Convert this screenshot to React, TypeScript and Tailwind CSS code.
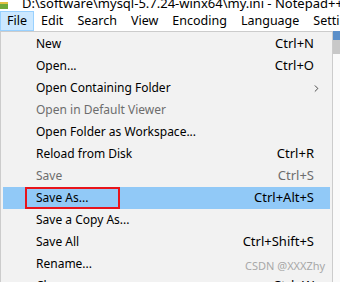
import { ChevronRight } from 'lucide-react';

type Item = {
  label: string;
  shortcut?: string;
  disabled?: boolean;
  active?: boolean;
  submenu?: boolean;
};

const items: Item[] = [
  { label: 'New', shortcut: 'Ctrl+N' },
  { label: 'Open...', shortcut: 'Ctrl+O' },
  { label: 'Open Containing Folder', submenu: true },
  { label: 'Open in Default Viewer', disabled: true },
  { label: 'Open Folder as Workspace...' },
  { label: 'Reload from Disk', shortcut: 'Ctrl+R' },
  { label: 'Save', shortcut: 'Ctrl+S', disabled: true },
  { label: 'Save As...', shortcut: 'Ctrl+Alt+S', active: true },
  { label: 'Save a Copy As...' },
  { label: 'Save All', shortcut: 'Ctrl+Shift+S' },
  { label: 'Rename...' },
  { label: 'Close', shortcut: 'Ctrl+W' },
];

const menus = ['File', 'Edit', 'Search', 'View', 'Encoding', 'Language', 'Settings'];

const App = () => {
  return (
    <div
      className="relative w-[340px] h-[282px] overflow-hidden bg-white text-black"
      style={{ fontFamily: '"Noto Sans", "Liberation Sans", sans-serif' }}
    >
      {/* Title bar, cut off at the top */}
      <div className="h-[11px] flex items-end overflow-hidden bg-white">
        <div className="w-[8px] h-[7px] bg-[#6fa83a] border-t-2 border-[#e0c040] mr-[14px] mb-[2px] shrink-0" />
        <span className="text-[13px] leading-[14px] mb-[1px] whitespace-nowrap">
          D:\software\mysql-5.7.24-winx64\my.ini - Notepad++
        </span>
      </div>

      {/* Menu bar */}
      <div className="h-[20px] flex items-stretch bg-white whitespace-nowrap text-[12.5px]">
        {menus.map((m, i) => (
          <div
            key={m}
            className={`flex items-center ${
              i === 0 ? 'bg-[#cce8ff] border border-[#99d1ff] px-[6px]' : 'px-[7px]'
            }`}
          >
            {m}
          </div>
        ))}
      </div>

      <div className="flex">
        {/* Dropdown */}
        <div className="w-[333px] shrink-0 bg-[#f2f2f2] border border-[#cccccc] pt-[1px] px-[2px] shadow-[2px_2px_2px_rgba(0,0,0,0.3)]">
          {items.map((it) => (
            <div
              key={it.label}
              className={`relative h-[22px] flex items-center pl-[33px] pr-[16px] whitespace-nowrap ${
                it.active ? 'bg-[#91c9f7]' : ''
              } ${it.disabled ? 'text-[#6d6d6d]' : ''}`}
            >
              {it.active && (
                <div className="absolute left-[22px] top-0 w-[95px] h-[22px] border-2 border-[#e8141b]" />
              )}
              <span className="flex-1 text-[12px]">{it.label}</span>
              {it.shortcut && <span className="text-[13px]">{it.shortcut}</span>}
              {it.submenu && <ChevronRight className="w-[11px] h-[11px] -mr-[8px]" strokeWidth={1.5} />}
            </div>
          ))}
        </div>

        {/* Editor strip at the right edge */}
        <div className="flex-1 flex flex-col">
          <div className="h-[9px] bg-[#5b8fc9]" />
          <div className="h-[14px] bg-[#c8c8c8]" />
          <div className="flex-1 bg-[#fafafa]" />
        </div>
      </div>

      {/* Watermark */}
      <div className="absolute left-[245px] top-[258px] text-[11px] text-[#a8a8a8] whitespace-nowrap">
        CSDN @XXXZhy
      </div>
    </div>
  );
};

export default App;
